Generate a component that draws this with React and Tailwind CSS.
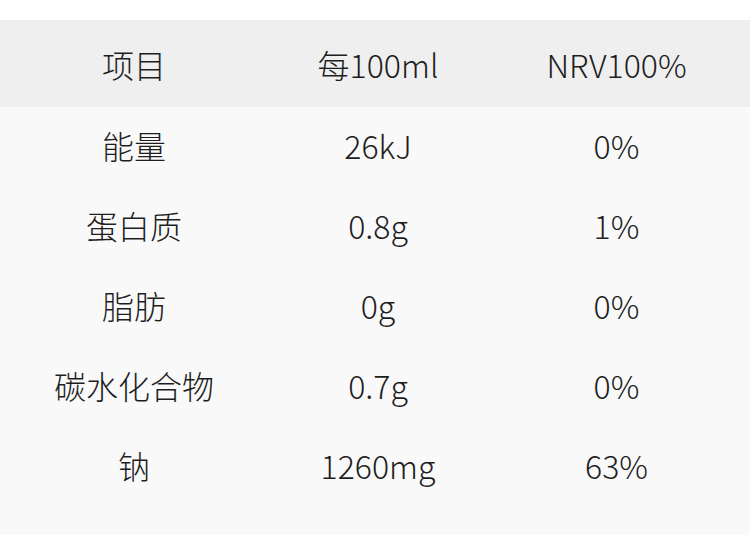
const rows = [
  ["能量", "26kJ", "0%"],
  ["蛋白质", "0.8g", "1%"],
  ["脂肪", "0g", "0%"],
  ["碳水化合物", "0.7g", "0%"],
  ["钠", "1260mg", "63%"],
];

const App = () => {
  return (
    <div className="w-[750px] h-[535px] bg-[#f9f9fa] text-[#1e1e1e] text-[32px] font-light font-['Noto_Sans_CJK_SC',sans-serif] overflow-hidden">
      <div className="h-[20px] bg-white"></div>
      <div className="grid grid-cols-[268px_220px_257px_1fr] h-[87px] items-center bg-[#efefef]">
        <div className="text-center">项目</div>
        <div className="text-center">每100ml</div>
        <div className="text-center">NRV100%</div>
      </div>
      {rows.map((r) => (
        <div key={r[0]} className="grid grid-cols-[268px_220px_257px_1fr] h-[80px] pb-[5px] items-center">
          <div className="text-center">{r[0]}</div>
          <div className="text-center">{r[1]}</div>
          <div className="text-center">{r[2]}</div>
        </div>
      ))}
    </div>
  );
};

export default App;
